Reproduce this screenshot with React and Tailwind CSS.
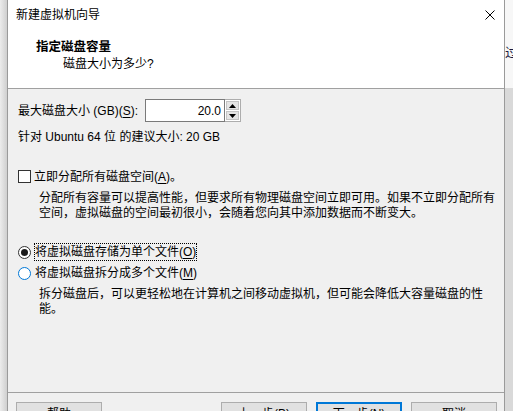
import React from "react";

const U = ({ children }) => <span className="underline underline-offset-2">{children}</span>;

function Radio({ checked }) {
  return checked ? (
    <span className="w-[13px] h-[13px] rounded-full border border-[#333333] bg-white flex items-center justify-center shrink-0">
      <span className="w-[7px] h-[7px] rounded-full bg-[#1a1a1a]" />
    </span>
  ) : (
    <span className="w-[13px] h-[13px] rounded-full border border-[#0078d7] bg-white shrink-0" />
  );
}

function Btn({ children, primary }) {
  return (
    <div
      className={
        "w-[86px] h-[23px] flex items-center justify-center bg-[#e1e1e1] " +
        (primary ? "border-2 border-[#0078d7]" : "border border-[#adadad]")
      }
    >
      {children}
    </div>
  );
}

export default function App() {
  return (
    <div
      className="w-[513px] h-[411px] flex overflow-hidden bg-[#f0f0f0] text-[12px] text-black"
      style={{ fontFamily: '"Liberation Sans", "Noto Sans CJK SC", sans-serif' }}
    >
      <div className="w-[7px] h-full bg-gradient-to-r from-[#ececec] to-[#cfcfcf] shrink-0" />
      <div className="w-[498px] h-full border-x border-[#9a9a9a] flex flex-col shrink-0">
        {/* header */}
        <div className="bg-white h-[88px] shrink-0 border-b border-[#a0a0a0] box-content">
          <div className="h-[30px] flex items-center justify-between pl-[8px] pr-[9px]">
            <span className="leading-[16px]">新建虚拟机向导</span>
            <svg width="10" height="10" viewBox="0 0 10 10">
              <path d="M0.5 0.5 L9.5 9.5 M9.5 0.5 L0.5 9.5" stroke="#000" strokeWidth="1" />
            </svg>
          </div>
          <div className="pl-[28px] mt-[9px] leading-[16px] font-bold text-[12.5px]">指定磁盘容量</div>
          <div className="pl-[55px] leading-[16px] mt-[1px]">磁盘大小为多少?</div>
        </div>
        {/* body */}
        <div className="flex-1 pl-[10px]">
          <div className="mt-[10px] flex items-center h-[23px]">
            <span className="w-[127px] leading-[16px]">
              最大磁盘大小 (GB)(<U>S</U>):
            </span>
            <div className="w-[80px] h-[23px] border border-[#7a7a7a] bg-white flex items-center justify-end pr-[3px] leading-[16px]">
              20.0
            </div>
            <div className="w-[16px] h-[23px] flex flex-col border border-[#adadad] border-l-0 bg-white p-[1px] gap-[1px]">
              <div className="flex-1 bg-[#e5e5e5] border border-[#c4c4c4] flex items-center justify-center">
                <svg width="7" height="4" viewBox="0 0 7 4"><path d="M3.5 0 L7 4 L0 4 Z" fill="#000" /></svg>
              </div>
              <div className="flex-1 bg-[#e5e5e5] border border-[#c4c4c4] flex items-center justify-center">
                <svg width="7" height="4" viewBox="0 0 7 4"><path d="M0 0 L7 0 L3.5 4 Z" fill="#000" /></svg>
              </div>
            </div>
          </div>
          <div className="mt-[7px] leading-[16px]">针对 Ubuntu 64 位 的建议大小: 20 GB</div>

          <div className="mt-[23px] h-[17px] flex items-center gap-[3px]">
            <span className="w-[13px] h-[13px] border border-[#333333] bg-white shrink-0" />
            <span className="leading-[16px]">
              立即分配所有磁盘空间(<U>A</U>)。
            </span>
          </div>
          <div className="mt-[6px] ml-[21px] w-[462px] leading-[15px]">
            分配所有容量可以提高性能，但要求所有物理磁盘空间立即可用。如果不立即分配所有空间，虚拟磁盘的空间最初很小，会随着您向其中添加数据而不断变大。
          </div>

          <div className="mt-[22px] h-[18px] flex items-center gap-[3px]">
            <Radio checked />
            <span className="leading-[16px] border border-dotted border-black">
              将虚拟磁盘存储为单个文件(<U>O</U>)
            </span>
          </div>
          <div className="mt-[3px] h-[18px] flex items-center gap-[3px]">
            <Radio />
            <span className="leading-[16px] px-[1px]">
              将虚拟磁盘拆分成多个文件(<U>M</U>)
            </span>
          </div>
          <div className="mt-[5px] ml-[21px] w-[450px] leading-[15px]">
            拆分磁盘后，可以更轻松地在计算机之间移动虚拟机，但可能会降低大容量磁盘的性能。
          </div>
        </div>
        {/* footer */}
        <div className="shrink-0 border-t border-[#a0a0a0] h-[19px] pt-[9px] pl-[8px] pr-[7px] flex justify-between items-start">
          <Btn>帮助</Btn>
          <div className="flex gap-[9px]">
            <Btn>
              上一步(<U>B</U>)
            </Btn>
            <Btn primary>
              下一步(<U>N</U>)
            </Btn>
            <Btn>取消</Btn>
          </div>
        </div>
      </div>
      <div className="w-[8px] h-full flex flex-col shrink-0">
        <div className="h-[88px] bg-[#f7f7f7] relative overflow-hidden">
          <span className="absolute left-[0px] top-[45px] leading-[16px] text-[13px] text-[#1a1a40]">过</span>
        </div>
        <div className="flex-1 bg-[#d9d9d9]" />
      </div>
    </div>
  );
}
